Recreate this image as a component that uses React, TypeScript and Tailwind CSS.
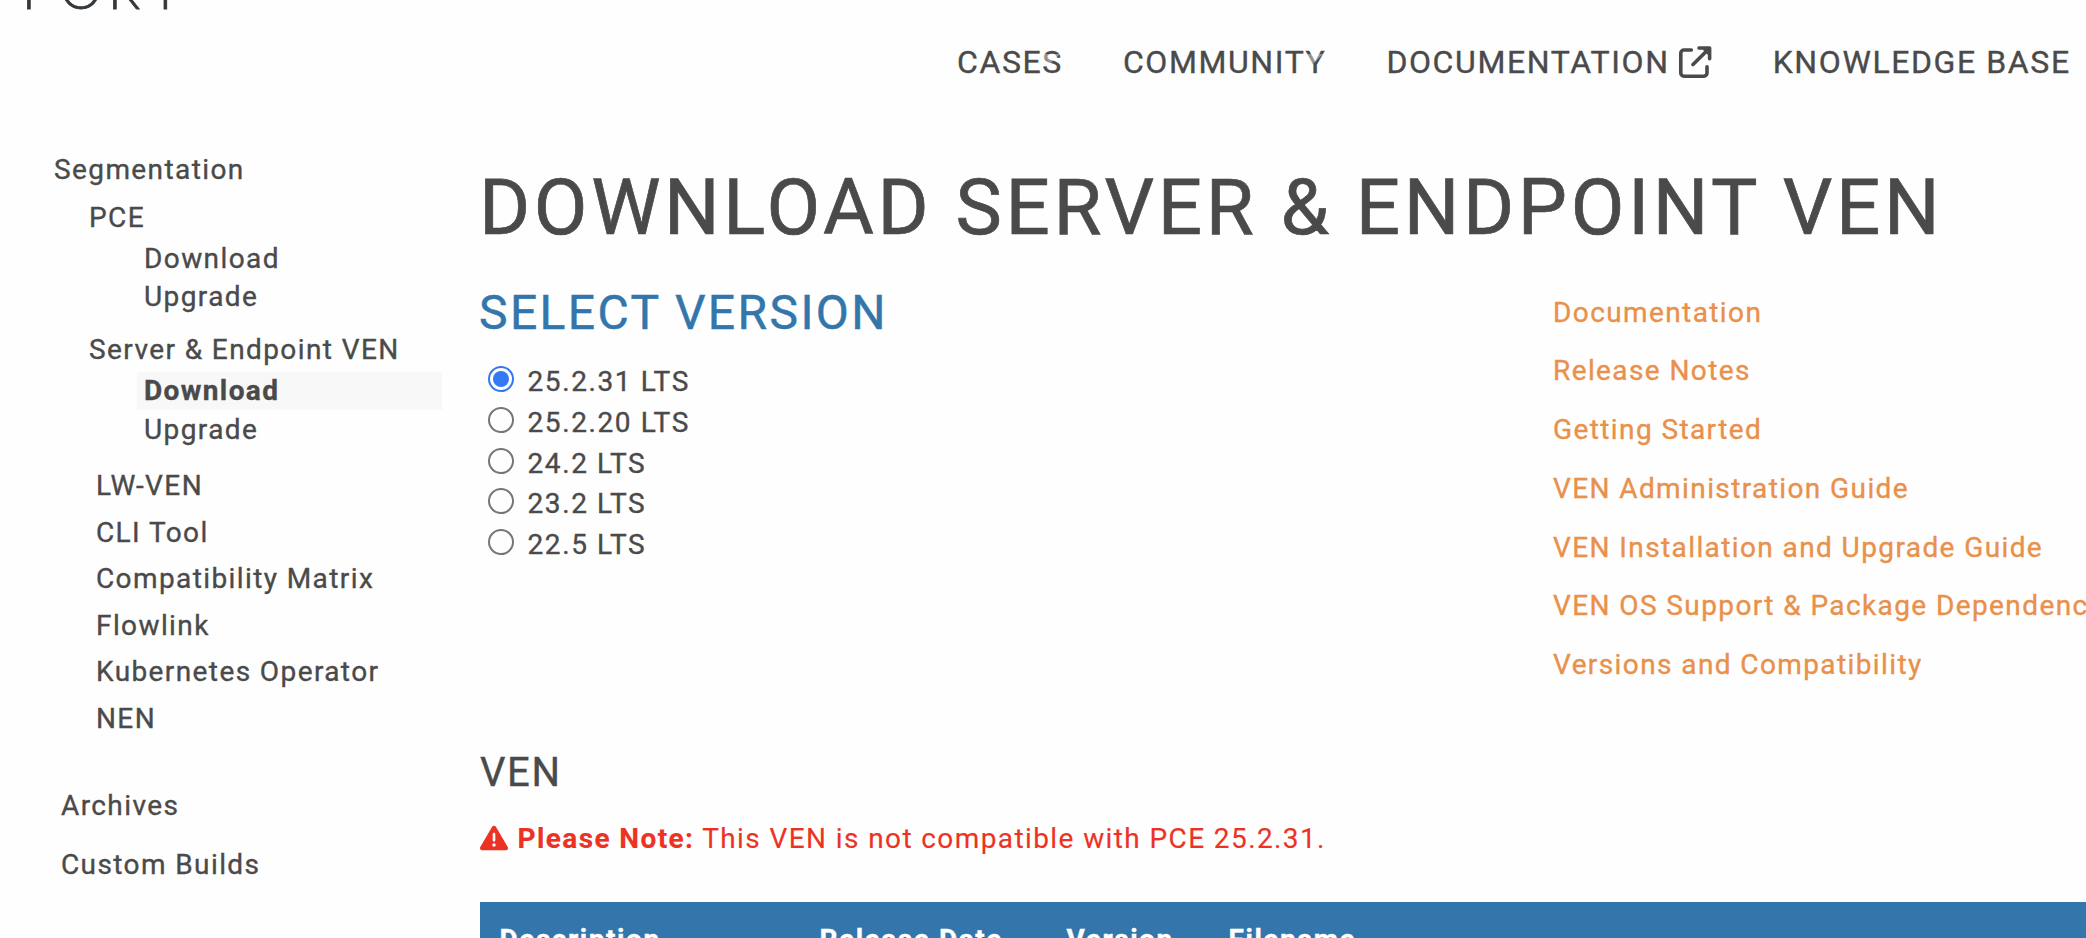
import { FaTriangleExclamation } from "react-icons/fa6";

const versions = ["25.2.31 LTS", "25.2.20 LTS", "24.2 LTS", "23.2 LTS", "22.5 LTS"];

const resources = [
  "Documentation",
  "Release Notes",
  "Getting Started",
  "VEN Administration Guide",
  "VEN Installation and Upgrade Guide",
  "VEN OS Support & Package Dependencies",
  "Versions and Compatibility",
];

const tools = ["LW-VEN", "CLI Tool", "Compatibility Matrix", "Flowlink", "Kubernetes Operator", "NEN"];

function Caret() {
  return (
    <svg className="absolute right-[3px] top-[19px] h-2.5 w-5" viewBox="0 0 20 10">
      <path d="M0 0h20L10 10z" fill="#fefefe" fillOpacity="0.4" />
    </svg>
  );
}

function ExternalLink() {
  return (
    <svg
      className="mt-[1px] ml-[9.5px] h-[33px] w-[33px]"
      viewBox="0 0 33 33"
      fill="none"
      stroke="currentColor"
      strokeWidth="3.6"
      strokeLinecap="round"
      strokeLinejoin="round"
    >
      <path d="M12.3 4H5a3.2 3.2 0 0 0-3.2 3.2V27A3.2 3.2 0 0 0 5 30.2h19.8A3.2 3.2 0 0 0 28 27v-6.3" />
      <path d="M14 18.6 30.2 2.4M20 2h10.6v10.8M26 3.5l3.5 3.5" />
    </svg>
  );
}

function Header() {
  return (
    <header className="flex h-[151px] items-start">
      <div className="-mt-[43px] flex h-[64px] w-[957px] pl-[22px] font-[Lato] text-[53px] leading-[64px] font-light text-[#33383c] [-webkit-text-stroke:0.8px_currentColor]">
        <span className="w-[38px]">P</span>
        <span className="w-[48px]">O</span>
        <span className="w-[42px]">R</span>
        <span>T</span>
      </div>
      <nav className="mt-[35px] flex gap-[60px] text-[32px] leading-[54px] tracking-[0.05em] whitespace-nowrap">
        <a className="relative">
          CASES
          <Caret />
        </a>
        <a className="relative">
          COMMUNITY
          <Caret />
        </a>
        <a className="flex items-center">
          DOCUMENTATION
          <ExternalLink />
        </a>
        <a className="ml-[0.5px]">KNOWLEDGE BASE</a>
      </nav>
    </header>
  );
}

function Sidebar() {
  return (
    <aside className="w-[480px] shrink-0 leading-[37px]">
      <div className="pl-[54px]">Segmentation</div>
      <div className="mt-[11px] pl-[89px]">PCE</div>
      <div className="mt-1 pl-[144px]">Download</div>
      <div className="mt-px pl-[144px]">Upgrade</div>
      <div className="mt-4 pl-[89px]">Server &amp; Endpoint VEN</div>
      <div className="mt-1 ml-[137px] h-[38px] w-[305px] bg-[#f8f8f8] pl-[7px] font-bold">Download</div>
      <div className="mt-px pl-[144px]">Upgrade</div>
      <div className="mt-[19px] flex flex-col gap-[9.6px] pl-[96px]">
        {tools.map((t) => (
          <div key={t}>{t}</div>
        ))}
      </div>
      <div className="mt-[50px] pl-[61px]">Archives</div>
      <div className="mt-[22px] pl-[61px]">Custom Builds</div>
    </aside>
  );
}

function VersionPicker() {
  return (
    <div className="mt-[24px] flex flex-col gap-[7.8px] pl-2 tracking-[1.6px]">
      {versions.map((v, i) => (
        <label key={v} className="flex items-start gap-[13.5px]">
          <span
            className={
              i === 0
                ? "mt-px flex size-[26px] items-center justify-center rounded-full border-2 border-[#3478f6]"
                : "mt-px size-[26px] rounded-full border-2 border-[#767676]"
            }
          >
            {i === 0 && <span className="size-4 rounded-full bg-[#3478f6]" />}
          </span>
          {v}
        </label>
      ))}
    </div>
  );
}

export default function App() {
  return (
    <div className="h-[938px] overflow-hidden bg-[#fefefe] font-[Roboto,sans-serif] text-[28px] leading-[33px] tracking-[1.4px] text-[#4a4a4a] [-webkit-text-stroke:0.35px_currentColor]">
      <Header />
      <div className="flex">
        <Sidebar />
        <main className="h-[787px] min-w-0 flex-1 overflow-hidden pt-[11px]">
          <h1 className="-ml-px text-[78px] leading-[91px] tracking-[3.66px] whitespace-nowrap [-webkit-text-stroke:0.7px_currentColor]">
            DOWNLOAD SERVER &amp; ENDPOINT VEN
          </h1>
          <div className="mt-[31px] flex h-[465px]">
            <section className="w-[1073px] shrink-0">
              <h2 className="-ml-px text-[48px] leading-[57px] tracking-[2.4px] text-[#3376ab] [-webkit-text-stroke:0.5px_currentColor]">
                SELECT VERSION
              </h2>
              <VersionPicker />
            </section>
            <section className="mt-[11.5px] flex flex-col gap-[25.8px] whitespace-nowrap text-[#e9904a]">
              {resources.map((r) => (
                <a key={r}>{r}</a>
              ))}
            </section>
          </div>
          <h3 className="text-[40px] leading-[47px] tracking-[1.6px]">VEN</h3>
          <p className="mt-[26px] flex items-start text-[#ec3323] [-webkit-text-stroke:0.15px_currentColor]">
            <FaTriangleExclamation className="mt-[1.5px] mr-[10px] -ml-[0.5px] size-[28px] shrink-0" />
            <span>
              <strong className="font-bold">Please Note:</strong> This VEN is not compatible with PCE 25.2.31.
            </span>
          </p>
          <div className="mt-[47px] grid h-[80px] grid-cols-[320px_247px_162px_1fr] bg-[#3376ab] pt-[21px] pl-[19.5px] font-bold tracking-[1.55px] text-white">
            <div>Description</div>
            <div>Release Date</div>
            <div>Version</div>
            <div>Filename</div>
          </div>
        </main>
      </div>
    </div>
  );
}
